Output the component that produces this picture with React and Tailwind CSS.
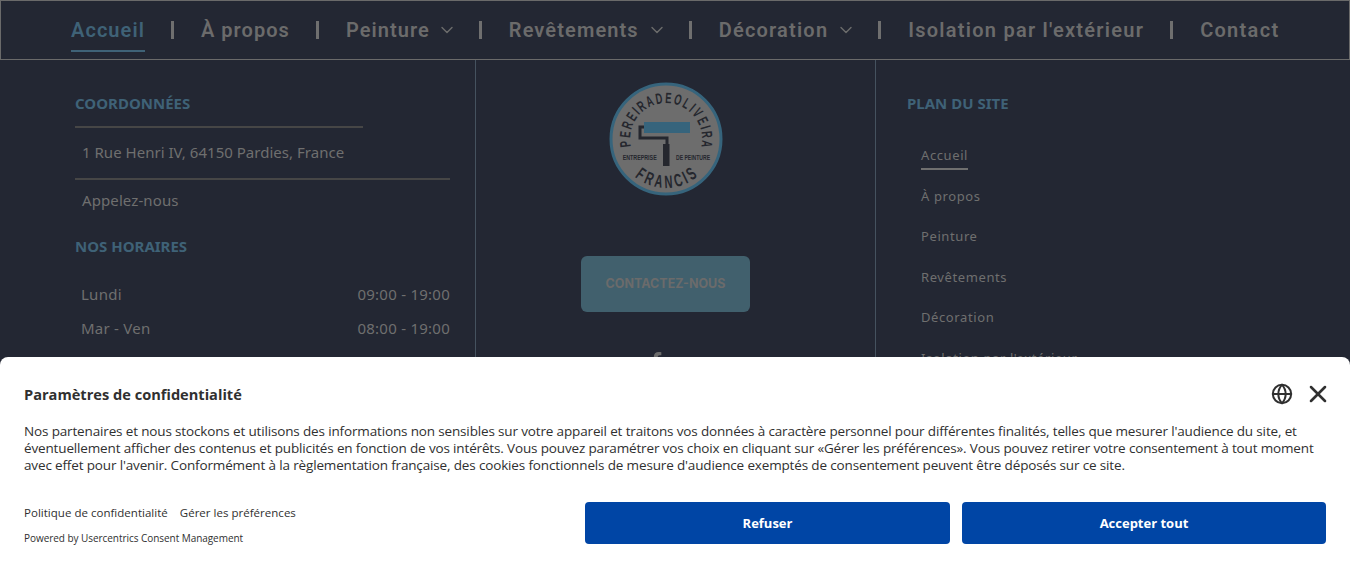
import { ChevronDown, Globe, X } from 'lucide-react'
import { FaFacebookF } from 'react-icons/fa'

const navItems = [
  { label: 'Accueil', active: true },
  { label: 'À propos' },
  { label: 'Peinture', caret: true, cls: 'gap-[7px]' },
  { label: 'Revêtements', caret: true, cls: 'gap-[8px] tracking-[1.1px]' },
  { label: 'Décoration', caret: true, cls: 'gap-[8px] tracking-[1.2px]' },
  { label: "Isolation par l'extérieur", cls: 'tracking-[1.25px]' },
  { label: 'Contact', cls: 'tracking-[1.3px]' },
]

const sitemap = ['À propos', 'Peinture', 'Revêtements', 'Décoration', "Isolation par l'extérieur"]

function Nav() {
  return (
    <nav className="h-[60px] border border-[#6a6a6a] pl-[70px] flex items-center font-['Roboto',sans-serif] font-semibold text-[20px] tracking-[1.05px] text-[#6b6b6b]">
      {navItems.map((item, i) => (
        <div key={item.label} className="flex items-center">
          {i > 0 && <span className="w-[3px] h-[18px] ml-[26px] mr-[27px] bg-[#6f6f6f]" />}
          <a className={item.active ? 'relative text-[#3f6277]' : `flex items-center ${item.cls || ''}`}>
            {item.label}
            {item.caret && <ChevronDown size={20} strokeWidth={1.7} className="-mr-[4px]" />}
            {item.active && <span className="absolute left-0 right-0 -bottom-[7px] h-[2px] bg-[#3f6277]" />}
          </a>
        </div>
      ))}
    </nav>
  )
}

// letters set one by one on a circle, squeezed like the logo's condensed lettering
function ArcText({ text, radius, from, to, size, flip }) {
  const widths = text.split('').map((ch) => (ch === 'I' ? 0.5 : 1))
  const total = widths.reduce((a, b) => a + b, 0) - (widths[0] + widths[widths.length - 1]) / 2
  let run = -widths[0] / 2
  return text.split('').map((ch, i) => {
    run += widths[i] / 2
    const angle = from + ((to - from) * run) / total
    run += widths[i] / 2
    const y = flip ? 58 + radius : 58 - radius
    return (
      <text
        key={i}
        textAnchor="middle"
        fontFamily="'Liberation Sans', sans-serif"
        fontSize={size}
        fontWeight="700"
        fill="#25272e"
        transform={`rotate(${angle} 58 58) translate(58 ${y}) scale(0.62 1)`}
      >
        {ch}
      </text>
    )
  })
}

function Logo() {
  const dark = '#25272e'
  return (
    <svg viewBox="0 0 116 116" className="w-[116px] h-[116px]">
      <circle cx="58" cy="58" r="55" fill="#6d6d6d" stroke="#36647c" strokeWidth="3" />
      <ArcText text="PEREIRADEOLIVEIRA" radius={36} from={-97} to={97} size={15} />
      <ArcText text="FRANCIS" radius={49} from={36} to={-36} size={18} flip />
      <text x="14.7" y="79.4" fontFamily="'Liberation Sans', sans-serif" fontSize="7" fontWeight="700" fill={dark} textLength="34" lengthAdjust="spacingAndGlyphs">ENTREPRISE</text>
      <text x="68" y="79.4" fontFamily="'Liberation Sans', sans-serif" fontSize="7" fontWeight="700" fill={dark} textLength="34" lengthAdjust="spacingAndGlyphs">DE PEINTURE</text>
      <rect x="36" y="41" width="46" height="11" fill="#36647c" />
      <path d="M36 46 H32 V57 H59 V64" fill="none" stroke={dark} strokeWidth="3" />
      <rect x="55" y="63" width="6.5" height="22" fill={dark} />
    </svg>
  )
}

function Footer() {
  return (
    <div className="grid grid-cols-[476px_400px_1fr] h-[508px] font-['Noto_Sans',sans-serif] text-[#6f6f6f]">
      <div className="border-r border-[#45525f] pl-[75px] pr-[25px] pt-[33px]">
        <h3 className="text-[15px] leading-5 font-bold text-[#3f6277]">COORDONNÉES</h3>
        <div className="w-[288px] mt-[13px] border-t-2 border-[#464646] pt-[14px] pb-[16px] pl-[7px] text-[15px] leading-5 tracking-[0.02px]">
          1 Rue Henri IV, 64150 Pardies, France
        </div>
        <div className="border-t-2 border-[#464646] pt-[10px] pl-[7px] text-[15px] leading-5 tracking-[0.1px]">Appelez-nous</div>
        <h3 className="mt-[26px] text-[15px] leading-5 font-bold text-[#3f6277]">NOS HORAIRES</h3>
        <div className="mt-[28px] pl-[6px] flex flex-col gap-[14px] text-[15px] leading-5 tracking-[0.25px]">
          <div className="flex justify-between"><span>Lundi</span><span>09:00 - 19:00</span></div>
          <div className="flex justify-between"><span>Mar - Ven</span><span>08:00 - 19:00</span></div>
          <div className="flex justify-between"><span>Samedi</span><span>08:00 - 12:00</span></div>
        </div>
      </div>
      <div className="border-r border-[#45525f] flex flex-col items-center pt-[21px] pr-[20px]">
        <Logo />
        <a className="mt-[59px] w-[169px] h-[56px] rounded-md bg-[#41606d] flex items-center justify-center text-[12.5px] font-bold font-['Inter',sans-serif] text-[#6b6b6b]">
          CONTACTEZ-NOUS
        </a>
        <FaFacebookF className="mt-[40px] -ml-[20px] text-[#6b6b6b]" size={20} />
      </div>
      <div className="pl-[31px] pt-[33px]">
        <h3 className="text-[15px] leading-5 font-bold text-[#3f6277]">PLAN DU SITE</h3>
        <ul className="mt-[32px] pl-[14px] text-[13px] leading-5 tracking-[0.6px] flex flex-col gap-[20.5px]">
          <li><span className="inline-block border-b-2 border-[#6f6f6f] pb-[3px] -mb-[5px]">Accueil</span></li>
          {sitemap.map((s) => <li key={s}>{s}</li>)}
        </ul>
      </div>
    </div>
  )
}

function ConsentBanner() {
  return (
    <div className="absolute left-0 right-0 bottom-0 h-[211px] bg-white rounded-t-lg px-6 pt-[27px] font-['Open_Sans',sans-serif] text-[#303030]">
      <div className="h-5 flex items-center justify-between">
        <h2 className="text-[14.6px] leading-5 font-bold">Paramètres de confidentialité</h2>
        <div className="-mr-[6px] flex items-center gap-[11px]">
          <Globe size={22} strokeWidth={2.2} />
          <X size={28} strokeWidth={2.2} />
        </div>
      </div>
      <p className="mt-[19px] w-[1310px] text-[13.5px] leading-[17px] tracking-[-0.15px]">
        Nos partenaires et nous stockons et utilisons des informations non sensibles sur votre appareil et traitons vos données à caractère personnel pour différentes finalités, telles que mesurer l'audience du site, et<br />
        éventuellement afficher des contenus et publicités en fonction de vos intérêts. Vous pouvez paramétrer vos choix en cliquant sur «Gérer les préférences». Vous pouvez retirer votre consentement à tout moment<br />
        avec effet pour l'avenir. Conformément à la règlementation française, des cookies fonctionnels de mesure d'audience exemptés de consentement peuvent être déposés sur ce site.
      </p>
      <div className="mt-[28px] flex items-start justify-between">
        <div className="pt-[3px] flex flex-col gap-[9px]">
          <div className="flex gap-3 text-[11.5px] leading-4 tracking-[0.02px]">
            <a>Politique de confidentialité</a>
            <a>Gérer les préférences</a>
          </div>
          <div className="text-[10px] leading-4 tracking-[-0.05px]">Powered by Usercentrics Consent Management</div>
        </div>
        <div className="flex gap-3">
          <button className="w-[365px] h-[42px] pt-px rounded bg-[#0045a5] text-white text-[13px] font-bold">Refuser</button>
          <button className="w-[364px] h-[42px] pt-px rounded bg-[#0045a5] text-white text-[13px] font-bold">Accepter tout</button>
        </div>
      </div>
    </div>
  )
}

export default function App() {
  return (
    <div className="relative h-[568px] overflow-hidden bg-[#232733]">
      <Nav />
      <Footer />
      <ConsentBanner />
    </div>
  )
}
